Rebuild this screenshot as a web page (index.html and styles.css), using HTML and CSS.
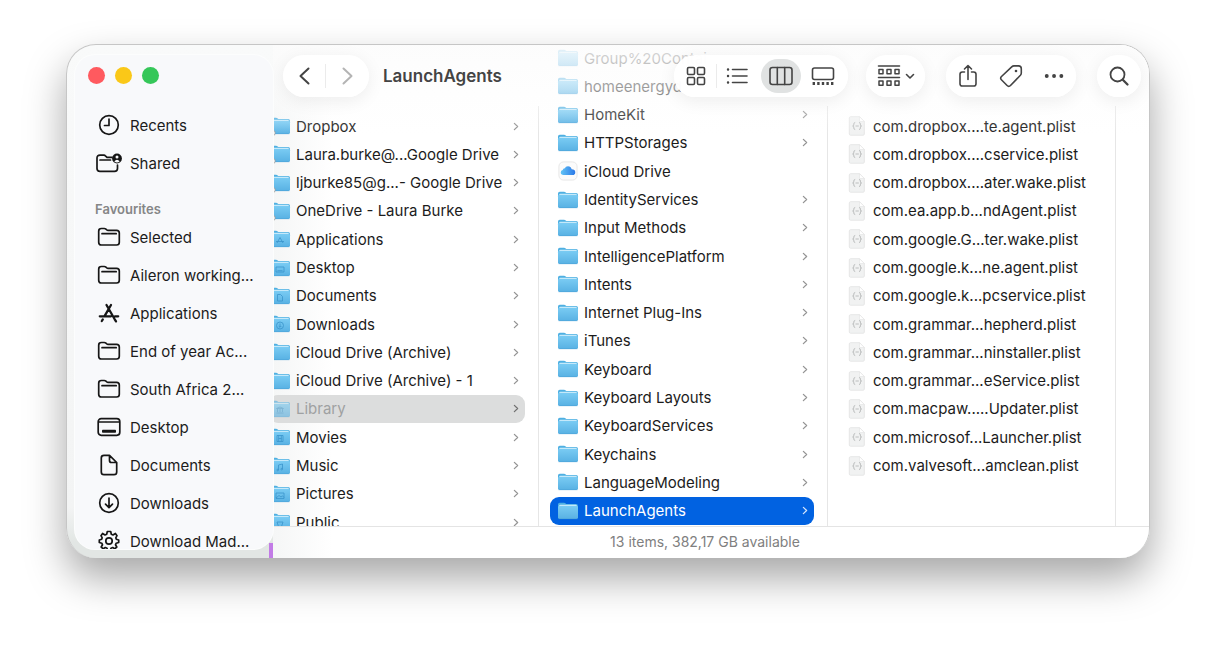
FILE: index.html
```html
<!DOCTYPE html>
<html lang="en">
<head>
    <meta charset="UTF-8">
    <meta name="viewport" content="width=device-width, initial-scale=1.0">
    <title>LaunchAgents</title>
    <link rel="stylesheet" href="styles.css">
</head>
<body>

<!-- shared icons -->
<svg class="defs" aria-hidden="true">
    <defs>
        <linearGradient id="blue" x1="0" y1="0" x2="0" y2="1">
            <stop offset="0" stop-color="#79cbf3"/>
            <stop offset="1" stop-color="#58b1e3"/>
        </linearGradient>
        <linearGradient id="cloudBlue" x1="0" y1="0" x2="1" y2="0">
            <stop offset="0" stop-color="#62c4f5"/>
            <stop offset="1" stop-color="#2b78e8"/>
        </linearGradient>
    </defs>
    <symbol id="folder" viewBox="0 0 22 20">
        <path d="M1 3.500Q1 1.800 2.700 1.800H7Q8 1.800 8.700 2.500L9.300 3H19Q21 3 21 5V9H1Z" fill="#4fb0e2"/>
        <rect x="2.200" y="3.800" width="17.600" height="4" rx="1" fill="#c5e9fa"/>
        <path d="M1 6.200Q1 5 2.200 5H19.800Q21 5 21 6.200V16.300Q21 18 19.300 18H2.700Q1 18 1 16.300Z" fill="url(#blue)"/>
        <path d="M1.500 17.700H20.500" stroke="#4ba3d6" stroke-width=".6"/>
    </symbol>
    <symbol id="linked" viewBox="0 0 22 20">
        <use href="#folder"/>
        <circle cx="3.500" cy="17" r="2.700" fill="#fff" stroke="#9b9b9b" stroke-width=".8"/>
        <path d="M3 18L5 16" stroke="#777" stroke-width=".9"/>
    </symbol>
    <symbol id="chev" viewBox="0 0 8 10">
        <path d="M2.200 1.500L5.800 5L2.200 8.500" fill="none" stroke="currentColor" stroke-width="1.400" stroke-linecap="round" stroke-linejoin="round"/>
    </symbol>
    <symbol id="plist" viewBox="0 0 18 20">
        <path d="M2.500 .7H11.500L16.300 5.500V18Q16.300 19.200 15.100 19.200H2.500Q1.300 19.200 1.300 18V1.900Q1.300 .7 2.500 .7Z" fill="#f1f2f2" stroke="#e6e7e7"/>
        <path d="M11.500 .7V5.500H16.300Z" fill="#fff" stroke="#e2e3e3" stroke-width=".6"/>
        <path d="M7.200 6.500Q5.800 6.500 5.800 8V9Q5.800 10 4.600 10Q5.800 10 5.800 11V12Q5.800 13.500 7.200 13.500M11 6.500Q12.400 6.500 12.400 8V9Q12.400 10 13.600 10Q12.400 10 12.400 11V12Q12.400 13.500 11 13.500M7.500 10H10.800" fill="none" stroke="#bcbebe"/>
    </symbol>
    <symbol id="cloud" viewBox="0 0 22 22">
        <rect x="1" y="1" width="20" height="20" rx="5" fill="#fbfbfb" stroke="#e6e6e6"/>
        <path d="M6 15.500Q3 15.300 3 12.700Q3 10.500 5.200 10Q5.400 8 7.500 8Q8.300 5.800 11 5.800Q14.200 5.800 15 9.200Q19 9.300 19 12.400Q19 15.500 16 15.500Z" fill="url(#cloudBlue)"/>
    </symbol>
    <symbol id="side-folder" viewBox="0 0 26 26">
        <path d="M2.700 7.200Q2.700 4.500 5.400 4.500H8.300Q9.200 4.500 9.900 5.100L10.800 5.900Q11.300 6.300 12 6.300H20.600Q23.300 6.300 23.300 9V18.300Q23.300 21 20.600 21H5.400Q2.700 21 2.700 18.300ZM6 9.700H20.200"/>
    </symbol>
</svg>

<div class="window">

    <aside class="sidebar">
        <div class="lights">
            <button class="light red" aria-label="Close"></button>
            <button class="light yellow" aria-label="Minimise"></button>
            <button class="light green" aria-label="Zoom"></button>
        </div>
        <nav>
            <a href="#" class="place">
                <svg viewBox="0 0 26 26"><circle cx="13" cy="13" r="9.300"/><path d="M13 7V13.500H8.500"/></svg>
                <span>Recents</span>
            </a>
            <a href="#" class="place">
                <svg viewBox="0 0 26 26"><path d="M16 7.300H11L9.400 5.800Q8.800 5.200 8 5.200H4Q1 5.200 1 8V18.500Q1 21.300 4 21.300H18.500Q21.500 21.300 21.500 18.500V15M4 10H14.500"/><circle cx="21" cy="8.500" r="4.900" fill="#161616" stroke="none"/><circle cx="21" cy="7" r="1.500" fill="#f8f9fb" stroke="none"/><path d="M18.300 11.600Q21 8 23.700 11.600Q21 13.300 18.300 11.600Z" fill="#f8f9fb" stroke="none"/></svg>
                <span>Shared</span>
            </a>
            <h2>Favourites</h2>
            <a href="#" class="place"><svg><use href="#side-folder"/></svg><span>Selected</span></a>
            <a href="#" class="place"><svg><use href="#side-folder"/></svg><span>Aileron working...</span></a>
            <a href="#" class="place">
                <svg viewBox="0 0 26 26"><path stroke-width="2.300" d="M10.500 5L18.700 19.300L20 21.400M15 5L8.700 15.800M3.800 16.300H15M19 16.300H22.200M6.800 19.400L5.800 21"/></svg>
                <span>Applications</span>
            </a>
            <a href="#" class="place"><svg><use href="#side-folder"/></svg><span>End of year Ac...</span></a>
            <a href="#" class="place"><svg><use href="#side-folder"/></svg><span>South Africa 2...</span></a>
            <a href="#" class="place">
                <svg viewBox="0 0 26 26"><rect x="2.200" y="4.700" width="21.600" height="16.600" rx="3"/><path d="M3 8H23"/><rect x="6" y="15.800" width="14" height="3" rx=".8" fill="#161616" stroke="none"/></svg>
                <span>Desktop</span>
            </a>
            <a href="#" class="place">
                <svg viewBox="0 0 26 26"><path d="M13.500 3.300H8Q5.300 3.300 5.300 6V20Q5.300 22.700 8 22.700H18Q20.700 22.700 20.700 20V10.500ZM13.500 3.300V8.500Q13.500 10.500 15.500 10.500H20.700"/></svg>
                <span>Documents</span>
            </a>
            <a href="#" class="place">
                <svg viewBox="0 0 26 26"><circle cx="13" cy="13" r="9.300"/><path d="M13 8V17.500M9.500 14.200L13 17.700L16.500 14.200"/></svg>
                <span>Downloads</span>
            </a>
            <a href="#" class="place">
                <svg viewBox="0 0 26 26"><circle cx="13" cy="13" r="3.200"/><path d="M11.300 3.500H14.700L15.300 6.300L17 7L19.400 5.500L21 7.700L19.800 9.800L20.300 11.200L22.700 12V14.500L20.200 15.200L19.500 16.800L20.800 19L18.800 20.800L16.700 19.500L15 20.200L14.500 22.600H11.500L11 20.200L9.300 19.500L7.200 20.800L5.200 19L6.500 16.800L5.800 15.200L3.300 14.500V12L5.700 11.200L6.200 9.800L5 7.700L6.600 5.500L9 7L10.700 6.300Z"/></svg>
                <span>Download Mad...</span>
            </a>
        </nav>
    </aside>

    <main class="main">
        <div class="columns">
            <ul class="column home">
                <li><a href="#"><svg class="icon"><use href="#linked"/></svg><span>Dropbox</span><svg class="chev"><use href="#chev"/></svg></a></li>
                <li><a href="#"><svg class="icon"><use href="#linked"/></svg><span>Laura.burke@...Google Drive</span><svg class="chev"><use href="#chev"/></svg></a></li>
                <li><a href="#"><svg class="icon"><use href="#linked"/></svg><span>ljburke85@g...- Google Drive</span><svg class="chev"><use href="#chev"/></svg></a></li>
                <li><a href="#"><svg class="icon"><use href="#linked"/></svg><span>OneDrive - Laura Burke</span><svg class="chev"><use href="#chev"/></svg></a></li>
                <li><a href="#"><svg class="icon" viewBox="0 0 22 20"><use href="#folder"/><path class="mark" d="M8 14L11 8.500L14 14M7 12.500H15"/></svg><span>Applications</span><svg class="chev"><use href="#chev"/></svg></a></li>
                <li><a href="#"><svg class="icon" viewBox="0 0 22 20"><use href="#folder"/><path class="mark" d="M7 9H15V14H7ZM8.500 12.700H13.500"/></svg><span>Desktop</span><svg class="chev"><use href="#chev"/></svg></a></li>
                <li><a href="#"><svg class="icon" viewBox="0 0 22 20"><use href="#folder"/><path class="mark" d="M8.500 8.500H11.500L13.500 10.500V15H8.500Z"/></svg><span>Documents</span><svg class="chev"><use href="#chev"/></svg></a></li>
                <li><a href="#"><svg class="icon" viewBox="0 0 22 20"><use href="#folder"/><circle class="mark" cx="11" cy="11.500" r="3.500"/><path class="mark" d="M11 9.500V13M9.700 12L11 13.300L12.300 12"/></svg><span>Downloads</span><svg class="chev"><use href="#chev"/></svg></a></li>
                <li><a href="#"><svg class="icon"><use href="#folder"/></svg><span>iCloud Drive (Archive)</span><svg class="chev"><use href="#chev"/></svg></a></li>
                <li><a href="#"><svg class="icon"><use href="#folder"/></svg><span>iCloud Drive (Archive) - 1</span><svg class="chev"><use href="#chev"/></svg></a></li>
                <li><a href="#" class="open"><svg class="icon" viewBox="0 0 22 20"><use href="#folder"/><path class="mark" d="M7.500 14H14.500M8.500 13V10M11 13V10M13.500 13V10M7.500 9.500L11 8L14.500 9.500Z"/></svg><span>Library</span><svg class="chev"><use href="#chev"/></svg></a></li>
                <li><a href="#"><svg class="icon" viewBox="0 0 22 20"><use href="#folder"/><path class="mark" d="M8 8.500H14V14.500H8ZM9.700 8.500V14.500M12.300 8.500V14.500M9.700 11.500H12.300"/></svg><span>Movies</span><svg class="chev"><use href="#chev"/></svg></a></li>
                <li><a href="#"><svg class="icon" viewBox="0 0 22 20"><use href="#folder"/><path class="mark" d="M9.500 14V9L13.500 8V13"/><circle class="mark" cx="8.700" cy="14" r=".8"/><circle class="mark" cx="12.700" cy="13.200" r=".8"/></svg><span>Music</span><svg class="chev"><use href="#chev"/></svg></a></li>
                <li><a href="#"><svg class="icon" viewBox="0 0 22 20"><use href="#folder"/><path class="mark" d="M7 9H15V14.500H7ZM7 14L10 11.500L12 13L13.500 11.800L15 13.500"/></svg><span>Pictures</span><svg class="chev"><use href="#chev"/></svg></a></li>
                <li><a href="#"><svg class="icon" viewBox="0 0 22 20"><use href="#folder"/><path class="mark" d="M8 10L14 10L12.500 14.500H9.500Z"/></svg><span>Public</span><svg class="chev"><use href="#chev"/></svg></a></li>
            </ul>
            <ul class="column library">
                <li><a href="#"><svg class="icon"><use href="#folder"/></svg><span>Group%20Contai</span></a></li>
                <li><a href="#"><svg class="icon"><use href="#folder"/></svg><span>homeenergyd</span></a></li>
                <li><a href="#"><svg class="icon"><use href="#folder"/></svg><span>HomeKit</span><svg class="chev"><use href="#chev"/></svg></a></li>
                <li><a href="#"><svg class="icon"><use href="#folder"/></svg><span>HTTPStorages</span><svg class="chev"><use href="#chev"/></svg></a></li>
                <li><a href="#"><svg class="icon"><use href="#cloud"/></svg><span>iCloud Drive</span></a></li>
                <li><a href="#"><svg class="icon"><use href="#folder"/></svg><span>IdentityServices</span><svg class="chev"><use href="#chev"/></svg></a></li>
                <li><a href="#"><svg class="icon"><use href="#folder"/></svg><span>Input Methods</span><svg class="chev"><use href="#chev"/></svg></a></li>
                <li><a href="#"><svg class="icon"><use href="#folder"/></svg><span>IntelligencePlatform</span><svg class="chev"><use href="#chev"/></svg></a></li>
                <li><a href="#"><svg class="icon"><use href="#folder"/></svg><span>Intents</span><svg class="chev"><use href="#chev"/></svg></a></li>
                <li><a href="#"><svg class="icon"><use href="#folder"/></svg><span>Internet Plug-Ins</span><svg class="chev"><use href="#chev"/></svg></a></li>
                <li><a href="#"><svg class="icon"><use href="#folder"/></svg><span>iTunes</span><svg class="chev"><use href="#chev"/></svg></a></li>
                <li><a href="#"><svg class="icon"><use href="#folder"/></svg><span>Keyboard</span><svg class="chev"><use href="#chev"/></svg></a></li>
                <li><a href="#"><svg class="icon"><use href="#folder"/></svg><span>Keyboard Layouts</span><svg class="chev"><use href="#chev"/></svg></a></li>
                <li><a href="#"><svg class="icon"><use href="#folder"/></svg><span>KeyboardServices</span><svg class="chev"><use href="#chev"/></svg></a></li>
                <li><a href="#"><svg class="icon"><use href="#folder"/></svg><span>Keychains</span><svg class="chev"><use href="#chev"/></svg></a></li>
                <li><a href="#"><svg class="icon"><use href="#folder"/></svg><span>LanguageModeling</span><svg class="chev"><use href="#chev"/></svg></a></li>
                <li><a href="#" class="selected"><svg class="icon"><use href="#folder"/></svg><span>LaunchAgents</span><svg class="chev"><use href="#chev"/></svg></a></li>
            </ul>
            <ul class="column files">
                <li><a href="#"><svg class="icon"><use href="#plist"/></svg><span>com.dropbox....te.agent.plist</span></a></li>
                <li><a href="#"><svg class="icon"><use href="#plist"/></svg><span>com.dropbox....cservice.plist</span></a></li>
                <li><a href="#"><svg class="icon"><use href="#plist"/></svg><span>com.dropbox....ater.wake.plist</span></a></li>
                <li><a href="#"><svg class="icon"><use href="#plist"/></svg><span>com.ea.app.b...ndAgent.plist</span></a></li>
                <li><a href="#"><svg class="icon"><use href="#plist"/></svg><span>com.google.G...ter.wake.plist</span></a></li>
                <li><a href="#"><svg class="icon"><use href="#plist"/></svg><span>com.google.k...ne.agent.plist</span></a></li>
                <li><a href="#"><svg class="icon"><use href="#plist"/></svg><span>com.google.k...pcservice.plist</span></a></li>
                <li><a href="#"><svg class="icon"><use href="#plist"/></svg><span>com.grammar...hepherd.plist</span></a></li>
                <li><a href="#"><svg class="icon"><use href="#plist"/></svg><span>com.grammar...ninstaller.plist</span></a></li>
                <li><a href="#"><svg class="icon"><use href="#plist"/></svg><span>com.grammar...eService.plist</span></a></li>
                <li><a href="#"><svg class="icon"><use href="#plist"/></svg><span>com.macpaw.....Updater.plist</span></a></li>
                <li><a href="#"><svg class="icon"><use href="#plist"/></svg><span>com.microsof...Launcher.plist</span></a></li>
                <li><a href="#"><svg class="icon"><use href="#plist"/></svg><span>com.valvesoft...amclean.plist</span></a></li>
            </ul>
        </div>

        <header class="toolbar">
            <div class="pill nav">
                <button aria-label="Back"><svg viewBox="0 0 24 24"><path stroke-width="2" d="M16.500 4.500L8.500 12L16.500 19.500"/></svg></button>
                <i class="divider"></i>
                <button aria-label="Forward" disabled><svg viewBox="0 0 24 24"><path stroke-width="2" d="M7.500 4.500L15.500 12L7.500 19.500"/></svg></button>
            </div>
            <h1>LaunchAgents</h1>
            <div class="pill views">
                <button aria-label="Icons"><svg viewBox="0 0 24 24"><rect x="3.500" y="3.500" width="7" height="7" rx="1.200"/><rect x="13.500" y="3.500" width="7" height="7" rx="1.200"/><rect x="3.500" y="13.500" width="7" height="7" rx="1.200"/><rect x="13.500" y="13.500" width="7" height="7" rx="1.200"/></svg></button>
                <i class="divider"></i>
                <button aria-label="List"><svg viewBox="0 0 24 24"><path d="M7.500 5.500H22M7.500 12H22M7.500 18.500H22"/><path stroke-width="2.400" d="M3 5.500H3.100M3 12H3.100M3 18.500H3.100"/></svg></button>
                <button aria-label="Columns" class="on"><svg viewBox="0 0 24 24"><rect x="1" y="3.500" width="22" height="17" rx="2.500"/><path d="M8.300 3.500V20.500M15.700 3.500V20.500"/></svg></button>
                <button aria-label="Gallery"><svg viewBox="0 0 24 24"><rect x="1.500" y="4" width="21" height="11.500" rx="2"/><path d="M1.600 19.500H22.400" stroke-width="3" stroke-dasharray="2.400 2.200" stroke-linecap="butt"/></svg></button>
            </div>
            <div class="pill group">
                <button aria-label="Group"><svg viewBox="0 0 24 24"><path d="M1.500 2H22.500M1.500 13.500H22.500"/><path d="M2 5.500H6V9.800H2ZM10 5.500H14V9.800H10ZM18 5.500H22V9.800H18ZM2 17H6V21.300H2ZM10 17H14V21.300H10ZM18 17H22V21.300H18Z" stroke-width="1.500"/></svg><svg class="caret" viewBox="0 0 10 10"><path d="M1.500 3.500L5 7L8.500 3.500"/></svg></button>
            </div>
            <div class="pill actions">
                <button aria-label="Share"><svg viewBox="0 0 24 24"><path d="M8.500 8H6.300Q4 8 4 10.300V19.700Q4 22 6.300 22H17.700Q20 22 20 19.700V10.300Q20 8 17.700 8H15.500M12 15.500V1.500M8.500 5L12 1.500L15.500 5"/></svg></button>
                <button aria-label="Tags"><svg viewBox="0 0 24 24"><path d="M12.700 2.800Q13.700 1.900 15 1.900H19.500Q22.300 1.900 22.300 4.700V9Q22.300 10.300 21.400 11.300L11.500 21.500Q9.800 23.200 8.100 21.500L2.400 15.800Q.8 14.200 2.500 12.500Z"/><circle cx="17" cy="7" r="1.300" fill="currentColor" stroke="none"/></svg></button>
                <button aria-label="More"><svg viewBox="0 0 24 24"><path stroke-width="3.800" d="M4.700 12H4.800M12 12H12.100M19.300 12H19.400"/></svg></button>
            </div>
            <div class="pill search">
                <button aria-label="Search"><svg viewBox="0 0 24 24"><circle cx="10.500" cy="10.500" r="7" stroke-width="1.800"/><path stroke-width="2.300" d="M15.800 15.800L20.500 20.500"/></svg></button>
            </div>
        </header>

        <footer class="status">13 items, 382,17 GB available</footer>
    </main>

    <i class="tag"></i>
</div>

</body>
</html>
```

FILE: styles.css
```css
* {
    box-sizing: border-box;
}

body {
    margin: 0;
    height: 100vh;
    padding: 44px 66px 88px;
    background: #fff;
    color: #1c1c1c;
    font-family: Inter, "Liberation Sans", sans-serif;
    font-size: 15px;
    overflow: hidden;
}

a {
    color: inherit;
    text-decoration: none;
}

button {
    padding: 0;
    border: 0;
    background: none;
    color: inherit;
    font: inherit;
}

ul {
    margin: 0;
    padding: 0;
    list-style: none;
}

.defs {
    position: absolute;
    width: 0;
    height: 0;
}

.window {
    position: relative;
    display: flex;
    height: 100%;
    border: 1px solid #c6c6c6;
    border-bottom: 0;
    border-radius: 30px;
    background: linear-gradient(#f9fafa, #f3f4f4 90%, #e2e6e4 97%);
    box-shadow: 0 20px 40px rgba(0, 0, 0, 0.35);
    overflow: hidden;
}

/* sidebar */
.sidebar {
    position: relative;
    z-index: 2;
    flex: none;
    width: 198px;
    margin: 10px 0 9px 8px;
    padding: 12px 0 0 20px;
    border-radius: 20px;
    background: #f8f9fb;
    box-shadow: 0 0 0 1px #fcfdfd;
    overflow: hidden;
}

.lights {
    display: flex;
    gap: 10px;
    margin: 0 0 22px -7px;
}

.light {
    width: 17px;
    height: 17px;
    border-radius: 50%;
}

.red { background: #ff5a5f; }
.yellow { background: #fac818; }
.green { background: #35c759; }

.place {
    display: flex;
    align-items: center;
    gap: 8px;
    height: 38px;
    margin-left: 1px;
    white-space: nowrap;
}

.place svg {
    flex: none;
    width: 26px;
    height: 26px;
    fill: none;
    stroke: #161616;
    stroke-width: 1.7;
    stroke-linecap: round;
    stroke-linejoin: round;
}

.sidebar h2 {
    margin: 0;
    padding-top: 18px;
    color: #858687;
    font-size: 13px;
    font-weight: 600;
    line-height: 18px;
}

/* right side */
.main {
    position: relative;
    flex: 1;
    min-width: 0;
    display: flex;
    flex-direction: column;
    background: linear-gradient(to right, #f5f6f6, #fff 60px);
}

.columns {
    flex: 1;
    min-height: 0;
    display: grid;
    grid-template-columns: 266fr 289fr 288fr 33fr;
    grid-template-rows: 100%;
    overflow: hidden;
}

/* the separator only starts under the toolbar */
.column {
    min-width: 0;
    background: linear-gradient(#e6e6e6, #e6e6e6) right bottom / 1px calc(100% - 61px) no-repeat;
    overflow: hidden;
}

.home,
.files {
    padding-top: 67px;
}

.library li:first-child {
    margin-top: -1px;
}

.column li {
    height: calc((100vh - 165px) / 17);
}

.column a {
    display: flex;
    align-items: center;
    height: 100%;
    margin: 0 14px 0 11px;
    padding: 0 5px 0 7px;
    border-radius: 9px;
    white-space: nowrap;
}

.column span {
    flex: 1;
}

.icon {
    flex: none;
    width: 22px;
    height: 20px;
    margin-right: 5px;
}

.chev {
    flex: none;
    width: 8px;
    height: 9px;
    color: #949494;
}

.home a {
    margin-left: -4px;
    padding-left: 0;
}

.files .icon {
    width: 18px;
    margin: 0 7px 0 2px;
}

.mark {
    fill: none;
    stroke: #3a94cc;
    stroke-width: 0.8;
}

.column .open {
    background: #dcdddd;
}

.open span {
    color: #9fa1a2;
}

.open .icon {
    opacity: 0.6;
}

.open .chev {
    color: #6f6f6f;
}

.column .selected {
    background: #0162e1;
    color: #fff;
}

.selected .chev {
    color: #d5e5fb;
}

.toolbar {
    position: absolute;
    top: 0;
    left: 0;
    right: 0;
    display: flex;
    align-items: flex-start;
    height: 90px;
    padding: 10px 8px 0 10px;
    color: #444;
    background: linear-gradient(rgba(252, 252, 252, 0.88), rgba(253, 253, 253, 0.55) 50%, rgba(255, 255, 255, 0));
}

.toolbar h1 {
    flex: 1;
    margin: 0 0 0 14px;
    font-size: 17px;
    font-weight: 600;
    line-height: 42px;
}

.pill {
    display: flex;
    align-items: center;
    justify-content: space-around;
    height: 42px;
    border-radius: 21px;
    background: rgba(255, 255, 255, 0.96);
    box-shadow: 0 4px 18px rgba(0, 0, 0, 0.07);
}

.pill button {
    display: flex;
    align-items: center;
    justify-content: center;
    width: 40px;
    height: 34px;
    border-radius: 17px;
}

.pill svg {
    width: 24px;
    height: 24px;
    fill: none;
    stroke: currentColor;
    stroke-width: 1.6;
    stroke-linecap: round;
    stroke-linejoin: round;
}

.pill button:disabled {
    color: #b4b4b4;
}

.divider {
    width: 1px;
    height: 24px;
    background: #ebebeb;
}

.nav { width: 86px; }
.actions { width: 130px; margin: 0 21px; }
.search { width: 44px; }

.views {
    justify-content: flex-start;
    width: 174px;
    padding-left: 2px;
}

.views .on {
    margin: 0 2px 0 4px;
    background: #e0e2e2;
}

.group {
    width: 59px;
    margin-left: 18px;
}

.group button {
    gap: 4px;
}

.pill .caret {
    width: 10px;
    height: 10px;
}

.status {
    height: 32px;
    padding-right: 12px;
    border-top: 1px solid #e4e4e4;
    color: #808080;
    font-size: 14px;
    line-height: 30px;
    text-align: center;
}

/* bit of coloured tag showing at the sidebar corner */
.tag {
    position: absolute;
    z-index: 1;
    left: 202px;
    bottom: 0;
    width: 4px;
    height: 15px;
    background: #c27be6;
}
```
